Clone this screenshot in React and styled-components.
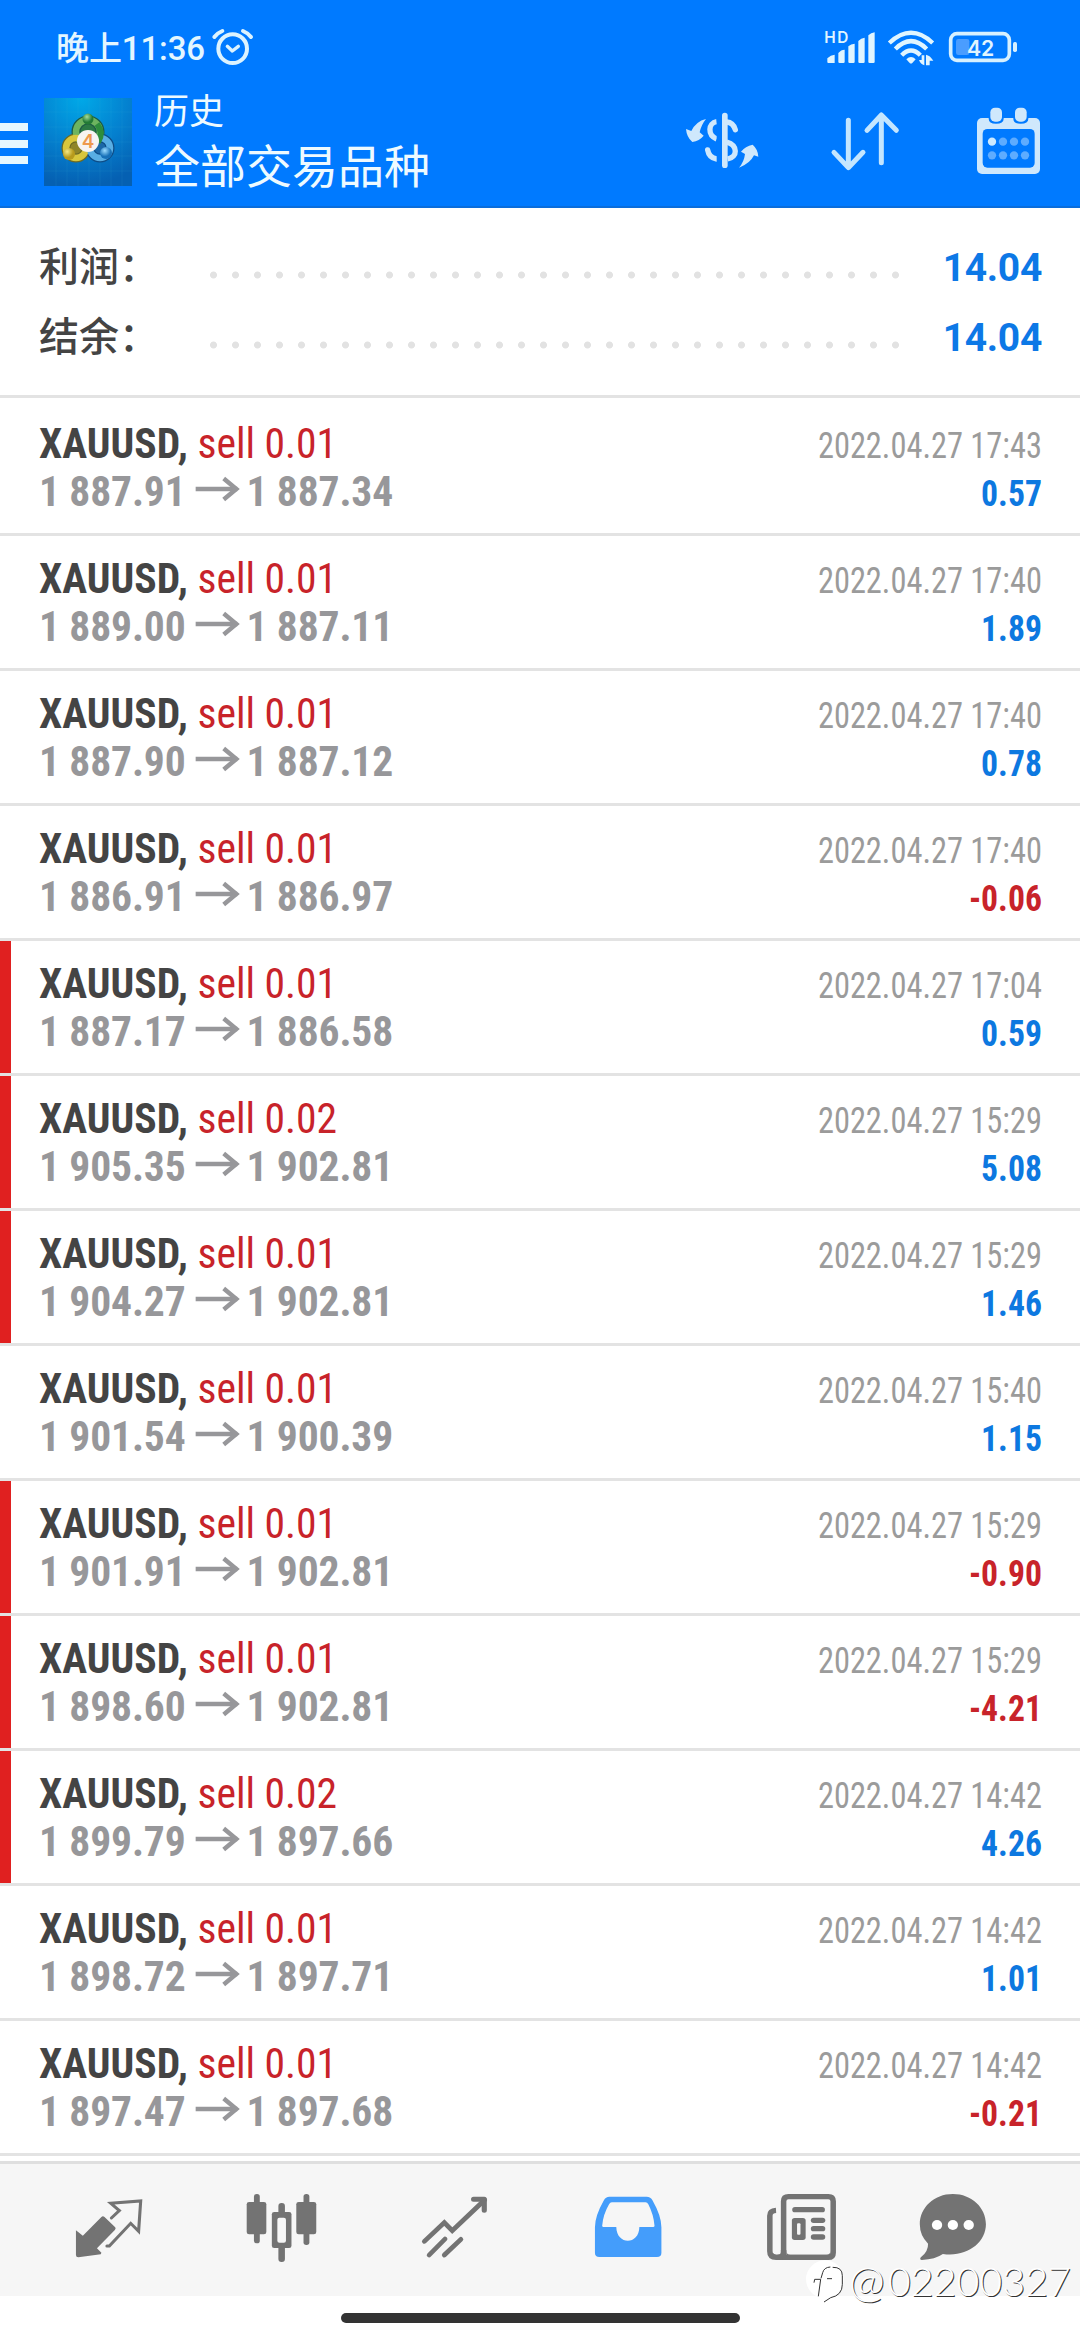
import React from "react";
import styled, { createGlobalStyle } from "styled-components";

const cjk = `Roboto, "Noto Sans CJK SC", sans-serif`;
const condensed = `"Roboto Condensed", Roboto, sans-serif`;

const GlobalStyle = createGlobalStyle`
  * { box-sizing: border-box; }
  body { margin: 0; background: #fff; }
  svg { display: block; flex: none; overflow: visible; }
`;

const Screen = styled.div`
  position: relative;
  display: flex;
  flex-direction: column;
  width: 1080px;
  height: 2340px;
  overflow: hidden;
  background: #fff;
  font-family: ${cjk};
`;

const Header = styled.header`
  display: flex;
  flex-direction: column;
  height: 208px;
  background: #007aff;
  border-bottom: 2px solid #0a6ddb;
  color: #fff;
`;

const StatusBar = styled.div`
  display: flex;
  align-items: flex-start;
  justify-content: space-between;
  height: 92px;
  padding: 28px 61px 0 56px;
`;

const StatusSide = styled.div`
  display: flex;
  align-items: flex-start;
`;

const Clock = styled.div`
  margin-right: 7px;
  padding-top: 1px;
  color: #e3f6ff;
  font-size: 33px;
  font-weight: 500;
  line-height: 40px;
  letter-spacing: -0.1px;
  white-space: nowrap;
`;

const Indicators = styled.div`
  display: flex;
  padding-top: 2px;
`;

const Spacer = styled.div`
  width: ${(p) => p.$w}px;
`;

const Toolbar = styled.div`
  display: flex;
  align-items: flex-start;
  flex: 1;
`;

const Menu = styled.div`
  display: flex;
  flex-direction: column;
  justify-content: space-between;
  width: 28px;
  height: 41px;
  margin-top: 31px;
`;

const MenuBar = styled.span`
  height: 8px;
  background: #e6f7ff;
`;

const Logo = styled.div`
  margin: 6px 22px 0 16px;
`;

const Titles = styled.div`
  flex: 1;
  padding-top: 3px;
`;

const Subtitle = styled.div`
  font-size: 35px;
  line-height: 36px;
  color: #eefaff;
`;

const Title = styled.div`
  margin-top: 8px;
  font-size: 46px;
  line-height: 56px;
  color: #eefaff;
`;

const Actions = styled.div`
  display: flex;
  gap: 59px;
  padding: 13px 30px 0 0;
`;

const Summary = styled.section`
  height: 190px;
  padding: 25px 38px 0 39px;
  border-bottom: 3px solid #e3e3e3;
`;

const SummaryRow = styled.div`
  display: flex;
  align-items: baseline;
  height: 70px;
  line-height: 70px;
`;

const SummaryLabel = styled.span`
  width: 164px;
  color: #444;
  font-size: 40px;
  font-weight: 500;
`;

const Leader = styled.span`
  align-self: flex-start;
  width: 704px;
  height: 8px;
  margin-top: 38px;
  background: radial-gradient(circle at 10.5px 4px, #e2e2e2 3.1px, transparent 3.9px) 0 0 / 22px 8px;
`;

const SummaryValue = styled.span`
  flex: 1;
  color: #0d78e6;
  font-size: 39px;
  font-weight: 700;
  letter-spacing: -0.3px;
  text-align: right;
`;

const List = styled.main`
  height: 1763px;
  padding-top: 3px;
`;

const Deal = styled.article`
  display: flex;
  justify-content: space-between;
  height: 135px;
  padding: 18px 38px 0 39px;
  border-bottom: 3px solid #e3e3e3;
  box-shadow: inset ${(p) => (p.$marked ? 11 : 0)}px 0 0 #e02020;
  font-family: ${condensed};
  white-space: nowrap;
`;

const DealMain = styled.div`
  font-size: 43px;
  line-height: 48px;
  transform: scaleX(0.967);
  transform-origin: left;
`;

const Symbol = styled.div`
  color: #444;
  font-weight: 700;
`;

const Side = styled.span`
  color: #c8232a;
  font-weight: 400;
`;

const Prices = styled.div`
  display: flex;
  align-items: center;
  color: #97979a;
  font-weight: 700;
  letter-spacing: -0.15px;
`;

const DealInfo = styled.div`
  padding-top: 3px;
  font-size: 36px;
  line-height: 48px;
  text-align: right;
`;

const Time = styled.div`
  color: #9b9b9b;
  transform: scaleX(0.9);
  transform-origin: right;
`;

const Profit = styled.div`
  color: ${(p) => (p.$loss ? "#c8232a" : "#0d78e0")};
  font-weight: 700;
  transform: scaleX(0.935);
  transform-origin: right;
`;

const TabBar = styled.nav`
  display: grid;
  grid-template-columns: repeat(5, 173px) 132px;
  justify-items: center;
  height: 135px;
  padding: 26px 0 0 22px;
  background: #f6f6f6;
  border-top: 3px solid #dfdfdf;
`;

const HomeArea = styled.div`
  display: flex;
  justify-content: center;
  padding-top: 17px;
`;

const HomeIndicator = styled.div`
  width: 399px;
  height: 10px;
  border-radius: 5px;
  background: #333;
`;

const Watermark = styled.div`
  position: absolute;
  right: 9px;
  bottom: 35px;
  display: flex;
  align-items: center;
  color: #fff;
  font-family: Lato, sans-serif;
  font-size: 39.5px;
  font-weight: 300;
  line-height: 48px;
  text-shadow: 1px 1px 0 #333;
`;

const At = styled.span`
  margin-right: 3px;
  font-size: 43px;
`;

const HeaderArt = ({ x, children }) => (
  <svg width="84" height="72" viewBox={`${x} 255 252 216`} fill="#cfe8fc" stroke="none">{children}</svg>
);

const TabArt = ({ x, color = "#737373", children }) => (
  <svg width="76" height="76" viewBox={`${x - 110.35} 150 220.7 228`} preserveAspectRatio="none" fill={color}>{children}</svg>
);

const AlarmIcon = () => (
  <svg width="42" height="40" viewBox="636 83 126 120" fill="none" stroke="#dcf3ff" strokeLinecap="round" strokeLinejoin="round">
    <circle cx="698" cy="145" r="43" strokeWidth="12" />
    <path d="M643 110Q652 98 667 92M729 92Q744 98 753 110" strokeWidth="12" />
    <path d="M682 138L697 152L715 138" strokeWidth="10" />
  </svg>
);

const SignalIcon = () => (
  <svg width="53" height="36" viewBox="432 30 159 108" fill="#e0f5ff">
    <text x="433" y="69" fontFamily="Inter, sans-serif" fontSize="46" fontWeight="600" textLength="72">HD</text>
    <path d="M442 126V115Q452 105 464 104V129H445Q442 129 442 126ZM475 126V99Q483 89 494 89V126Q494 129 490 129H479Q475 129 475 126ZM505 126V79Q513 71 524 71V126Q524 129 520 129H509Q505 129 505 126ZM535 126V63Q543 54 554 53V126Q554 129 550 129H539Q535 129 535 126ZM565 126V46Q573 38 584 37V126Q584 129 580 129H569Q565 129 565 126Z" />
  </svg>
);

const WifiIcon = () => (
  <svg width="48" height="36" viewBox="621 30 144 108" fill="none" stroke="#e0f5ff" strokeWidth="13">
    <path d="M628 69Q693 8 758 69" />
    <path d="M646 87Q693 40 740 87" />
    <path d="M665 106Q693 77 721 106" />
    <path d="M679 118Q693 104 707 118L697 129Q693 132 689 129Z" fill="#e0f5ff" stroke="none" />
    <path d="M717 120H725V106H733V136Q722 133 717 120ZM738 136V104Q750 106 760 122H749V136Z" fill="#e0f5ff" stroke="none" />
  </svg>
);

const BatteryIcon = () => (
  <svg width="71" height="36" viewBox="804 30 213 108">
    <rect x="812" y="41" width="176" height="80" rx="19" fill="none" stroke="#d6f0ff" strokeWidth="11" />
    <rect x="828" y="57" width="40" height="48" rx="7" fill="#4a9dff" />
    <rect x="999" y="66" width="12" height="30" rx="5" fill="#d6f0ff" />
    <text x="861" y="107" fill="#e0f5ff" fontFamily="Inter, sans-serif" fontSize="66" fontWeight="600" textLength="82" lengthAdjust="spacingAndGlyphs">42</text>
  </svg>
);

const AppLogo = () => (
  <svg width="88" height="88" viewBox="0 0 88 88">
    <defs>
      <radialGradient id="sky" cx=".42" cy="0" r="1">
        <stop offset="0" stopColor="#00a9e8" /><stop offset=".55" stopColor="#0480cf" /><stop offset="1" stopColor="#0560b2" />
      </radialGradient>
      <radialGradient id="gold" cx=".35" cy=".3"><stop offset="0" stopColor="#f3e884" /><stop offset="1" stopColor="#b79a1c" /></radialGradient>
      <radialGradient id="green" cx=".4" cy=".3"><stop offset="0" stopColor="#a5dc9a" /><stop offset="1" stopColor="#227a35" /></radialGradient>
      <radialGradient id="blue" cx=".4" cy=".3"><stop offset="0" stopColor="#9cdcff" /><stop offset="1" stopColor="#1670b8" /></radialGradient>
    </defs>
    <rect width="88" height="88" fill="url(#sky)" />
    <path d="M12 0V88M23 0V88M34 0V88M45 0V88M56 0V88M67 0V88M78 0V88M0 14H88M0 29H88M0 44H88M0 58H88M0 73H88" stroke="#4cb8e8" strokeOpacity=".14" strokeWidth=".8" />
    <circle cx="44" cy="34" r="12" fill="#2c7a44" stroke="#1d5b45" strokeWidth="9" />
    <circle cx="32" cy="50" r="10" fill="#8f8528" stroke="#6d6a24" strokeWidth="9" />
    <circle cx="56" cy="50" r="10" fill="#1c68a8" stroke="#0e4c86" strokeWidth="9" />
    <circle cx="44" cy="34" r="12" fill="none" stroke="#6db45f" strokeWidth="6.500" />
    <circle cx="32" cy="50" r="10" fill="none" stroke="#d8c63c" strokeWidth="6.500" />
    <circle cx="56" cy="50" r="10" fill="none" stroke="#58aee4" strokeWidth="6.500" />
    <path d="M53 26Q60 35 54 44" fill="none" stroke="#2e8d3c" strokeWidth="6" />
    <circle cx="44" cy="21" r="5.500" fill="url(#green)" />
    <circle cx="25" cy="56" r="6" fill="url(#gold)" />
    <circle cx="62" cy="55" r="6" fill="url(#blue)" />
    <circle cx="44" cy="43" r="11" fill="#f7f4f2" />
    <text x="44" y="50" fill="#ee9a4e" fontFamily="Inter, sans-serif" fontSize="19" fontWeight="600" textAnchor="middle">4</text>
  </svg>
);

const CurrencyIcon = () => (
  <HeaderArt x={0}>
    <path d="M18 327L34 333Q48 304 78 297Q64 314 59 337L71 347Q58 363 37 366Q20 352 18 327Z" />
    <path d="M235 410L222 406Q210 431 177 443Q192 426 195 402L183 395Q196 378 218 374Q234 388 235 410Z" />
    <g fill="none" stroke="#cfe8fc" strokeWidth="16">
      <path d="M110 305C84 309 82 345 110 357" />
      <path d="M83 390C86 407 96 415 110 417" strokeLinecap="round" />
      <path d="M140 306C154 307 162 316 166 329" strokeLinecap="round" />
      <path d="M140 366C174 376 174 411 143 417" />
    </g>
    <path d="M110 295H126V440H110Z" fill="#007aff" />
    <rect x="126" y="278" width="17" height="166" rx="8.500" />
  </HeaderArt>
);

const SortIcon = () => (
  <HeaderArt x={429}>
    <path d="M505 301V442M462 397L505 443L549 397M604 428V286M561 331L604 285L649 331" fill="none" stroke="#c4e6ff" strokeWidth="15" strokeLinecap="round" strokeLinejoin="round" />
  </HeaderArt>
);

const CalendarIcon = () => (
  <HeaderArt x={858}>
    <rect x="891" y="294" width="189" height="168" rx="15" />
    <rect x="908" y="327" width="156" height="116" rx="14" fill="#007aff" />
    <path d="M926 290H971V296Q971 311 948 311Q926 311 926 296ZM1000 290H1045V296Q1045 311 1022 311Q1000 311 1000 296Z" fill="#007aff" />
    <rect x="931" y="263" width="35" height="42" rx="14" />
    <rect x="1005" y="263" width="35" height="42" rx="14" />
    {[936, 969, 1002, 1035].map((cx) => [365, 406].map((cy) => (
      <circle key={`${cx}-${cy}`} cx={cx} cy={cy} r="12.500" fill={cx === 936 && cy === 365 ? "#cdeaff" : "#5eacff"} />
    )))}
  </HeaderArt>
);

const QuotesIcon = () => (
  <TabArt x={315}>
    <path d="M219 271L239 287L293 231Q297 226 302 231L333 262Q336 266 332 270L280 325L293 338L291 343L226 352Q219 352 219 345Z" />
    <path d="M322 234L345 212L320 190L407 183L401 274L378 250L316 318L309 318" fill="none" stroke="#737373" strokeWidth="9" strokeLinecap="round" strokeLinejoin="miter" />
  </TabArt>
);

const ChartIcon = () => (
  <TabArt x={817.5}>
    <rect x="736" y="162" width="17" height="148" rx="8" /><rect x="715" y="186" width="57" height="97" rx="7" />
    <rect x="880" y="162" width="17" height="153" rx="8" /><rect x="859" y="186" width="58" height="97" rx="7" />
    <rect x="807" y="189" width="19" height="177" rx="9" /><rect x="788" y="216" width="57" height="108" rx="7" />
    <rect x="804" y="233" width="25" height="75" rx="6" fill="#f6f6f6" />
  </TabArt>
);

const TradeIcon = () => (
  <TabArt x={1320}>
    <path d="M1231 304L1289 248L1312 272L1406 180M1245 345L1291 297M1289 345L1337 298" fill="none" stroke="#737373" strokeWidth="14" strokeLinecap="round" strokeLinejoin="miter" />
    <path d="M1374 178H1405V211" fill="none" stroke="#737373" strokeWidth="15" strokeLinecap="round" strokeLinejoin="round" />
  </TabArt>
);

const HistoryIcon = () => (
  <TabArt x={254} color="#449dfb">
    <path fillRule="evenodd" d="M200 170H308Q320 170 325 181Q351 228 351 262V338Q351 351 338 351H171Q158 351 158 338V262Q158 228 184 181Q189 170 200 170ZM207 187Q202 187 199 193Q182 223 179 257Q179 261 183 261H220C221 316 286 316 287 261H327Q331 261 331 257Q328 223 313 193Q310 187 305 187Z" />
  </TabArt>
);

const NewsIcon = () => (
  <TabArt x={756.5}>
    <g fill="none" stroke="#737373" strokeWidth="16">
      <path d="M706 352V184Q706 170 720 170H836Q850 170 850 184V338Q850 352 836 352H684Q666 352 666 334V227Q666 212 684 211" />
      <path d="M706 330V336Q706 352 688 352" />
    </g>
    <path d="M714 320V332Q714 344 726 344H830Q842 344 842 332V350H714ZM676 352L674 332Q674 344 686 344H694L698 352Z" />
    <rect x="731" y="201" width="95" height="16" rx="8" />
    <rect x="730" y="234" width="40" height="66" rx="8" /><rect x="745" y="250" width="10" height="34" rx="3" fill="#f6f6f6" />
    <rect x="785" y="233" width="42" height="16" rx="8" /><rect x="785" y="258" width="42" height="16" rx="8" /><rect x="785" y="283" width="42" height="16" rx="8" />
  </TabArt>
);

const ChatIcon = () => (
  <TabArt x={1199.4}>
    <path d="M1199 162C1254 162 1295 203 1295 253C1295 309 1238 353 1170 342Q1148 358 1109 360Q1101 359 1106 352Q1128 334 1127 311Q1103 287 1103 253C1103 203 1144 162 1199 162Z" />
    <circle cx="1153" cy="255" r="15" fill="#fff" /><circle cx="1199" cy="255" r="15" fill="#fff" /><circle cx="1245" cy="255" r="15" fill="#fff" />
  </TabArt>
);

const WatermarkLogo = () => (
  <svg width="44" height="48" viewBox="48 28 132 144" fill="none">
    <circle cx="108" cy="95" r="57" fill="#fff" />
    <path d="M75 105L77 95H95L88 146M96 92L101 75Q105 59 124 58M114 93H129M131 59Q160 58 160 84V110Q160 143 125 150L105 163" stroke="#333" strokeWidth="3" />
  </svg>
);

const Arrow = () => (
  <svg width="63" height="30" viewBox="1 0 63 30" fill="none" stroke="#97979a" strokeWidth="4.600">
    <path d="M11 13H54" /><path d="M40 2.500L53 13L40 23.500" />
  </svg>
);

const deals = [
  ["0.01", "1 887.91", "1 887.34", "2022.04.27 17:43", "0.57", false],
  ["0.01", "1 889.00", "1 887.11", "2022.04.27 17:40", "1.89", false],
  ["0.01", "1 887.90", "1 887.12", "2022.04.27 17:40", "0.78", false],
  ["0.01", "1 886.91", "1 886.97", "2022.04.27 17:40", "-0.06", false],
  ["0.01", "1 887.17", "1 886.58", "2022.04.27 17:04", "0.59", true],
  ["0.02", "1 905.35", "1 902.81", "2022.04.27 15:29", "5.08", true],
  ["0.01", "1 904.27", "1 902.81", "2022.04.27 15:29", "1.46", true],
  ["0.01", "1 901.54", "1 900.39", "2022.04.27 15:40", "1.15", false],
  ["0.01", "1 901.91", "1 902.81", "2022.04.27 15:29", "-0.90", true],
  ["0.01", "1 898.60", "1 902.81", "2022.04.27 15:29", "-4.21", true],
  ["0.02", "1 899.79", "1 897.66", "2022.04.27 14:42", "4.26", true],
  ["0.01", "1 898.72", "1 897.71", "2022.04.27 14:42", "1.01", false],
  ["0.01", "1 897.47", "1 897.68", "2022.04.27 14:42", "-0.21", false],
];

export default function App() {
  return (
    <Screen>
      <GlobalStyle />
      <Header>
        <StatusBar>
          <StatusSide><Clock>晚上11:36</Clock><AlarmIcon /></StatusSide>
          <Indicators><SignalIcon /><Spacer $w={10} /><WifiIcon /><Spacer $w={13} /><BatteryIcon /></Indicators>
        </StatusBar>
        <Toolbar>
          <Menu><MenuBar /><MenuBar /><MenuBar /></Menu>
          <Logo><AppLogo /></Logo>
          <Titles><Subtitle>历史</Subtitle><Title>全部交易品种</Title></Titles>
          <Actions><CurrencyIcon /><SortIcon /><CalendarIcon /></Actions>
        </Toolbar>
      </Header>
      <Summary>
        {["利润：", "结余："].map((label) => (
          <SummaryRow key={label}>
            <SummaryLabel>{label}</SummaryLabel><Leader /><SummaryValue>14.04</SummaryValue>
          </SummaryRow>
        ))}
      </Summary>
      <List>
        {deals.map(([lots, open, close, time, profit, marked], i) => (
          <Deal key={i} $marked={marked}>
            <DealMain>
              <Symbol>XAUUSD, <Side>sell {lots}</Side></Symbol>
              <Prices>{open}<Arrow />{close}</Prices>
            </DealMain>
            <DealInfo>
              <Time>{time}</Time>
              <Profit $loss={profit.startsWith("-")}>{profit}</Profit>
            </DealInfo>
          </Deal>
        ))}
      </List>
      <TabBar>
        <QuotesIcon /><ChartIcon /><TradeIcon /><HistoryIcon /><NewsIcon /><ChatIcon />
      </TabBar>
      <HomeArea><HomeIndicator /></HomeArea>
      <Watermark><WatermarkLogo /><At>@</At>02200327</Watermark>
    </Screen>
  );
}
